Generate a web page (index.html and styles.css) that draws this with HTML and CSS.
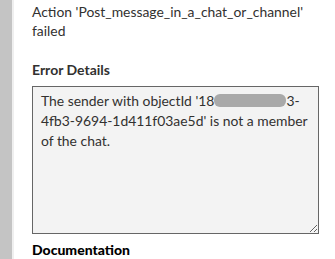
FILE: index.html
```html
<!DOCTYPE html>
<html>
<head>
<meta charset="utf-8">
<link rel="stylesheet" href="styles.css">
</head>
<body>
<div class="page">
  <div class="rail"></div>
  <div class="content">
    <p class="status">Action 'Post_message_in_a_chat_or_channel' failed</p>
    <h3 class="label">Error Details</h3>
    <div class="box"><span>The sender with objectId '18</span><span class="redact"></span><span>3-</span><br><span>4fb3-9694-1d411f03ae5d' is not a member</span><br><span>of the chat.</span></div>
    <h3 class="label doc">Documentation</h3>
  </div>
</div>
</body>
</html>
```
FILE: styles.css
```css
html, body {
  margin: 0;
  padding: 0;
  background: #fff;
}
body {
  font-family: Lato, "Noto Sans", sans-serif;
  color: #323130;
  font-size: 13.9px;
  overflow: hidden;
}
.page {
  display: flex;
  width: 335px;
  height: 259px;
}
.rail {
  width: 12px;
  flex: none;
  background: #c4c4c4;
  border-right: 2px solid #efefef;
}
.content {
  flex: 1;
  padding: 2px 16px 0 18px;
}
.status {
  margin: 0;
  line-height: 19px;
}
.label {
  margin: 20px 0 0;
  font-size: 14px;
  font-weight: 700;
  line-height: 20px;
}
.box {
  margin-top: 6px;
  height: 136px;
  padding: 4px 8px 6px;
  background: #f3f3f3;
  border: 1px solid #666;
  line-height: 20px;
  white-space: nowrap;
  resize: both;
  overflow: auto;
  box-sizing: content-box;
}
.redact {
  display: inline-block;
  width: 72px;
  height: 13px;
  vertical-align: -1px;
  background: #a9a9a9;
  border-radius: 6px;
}
.doc {
  margin-top: 6px;
  font-weight: 900;
  color: #000;
}
```
